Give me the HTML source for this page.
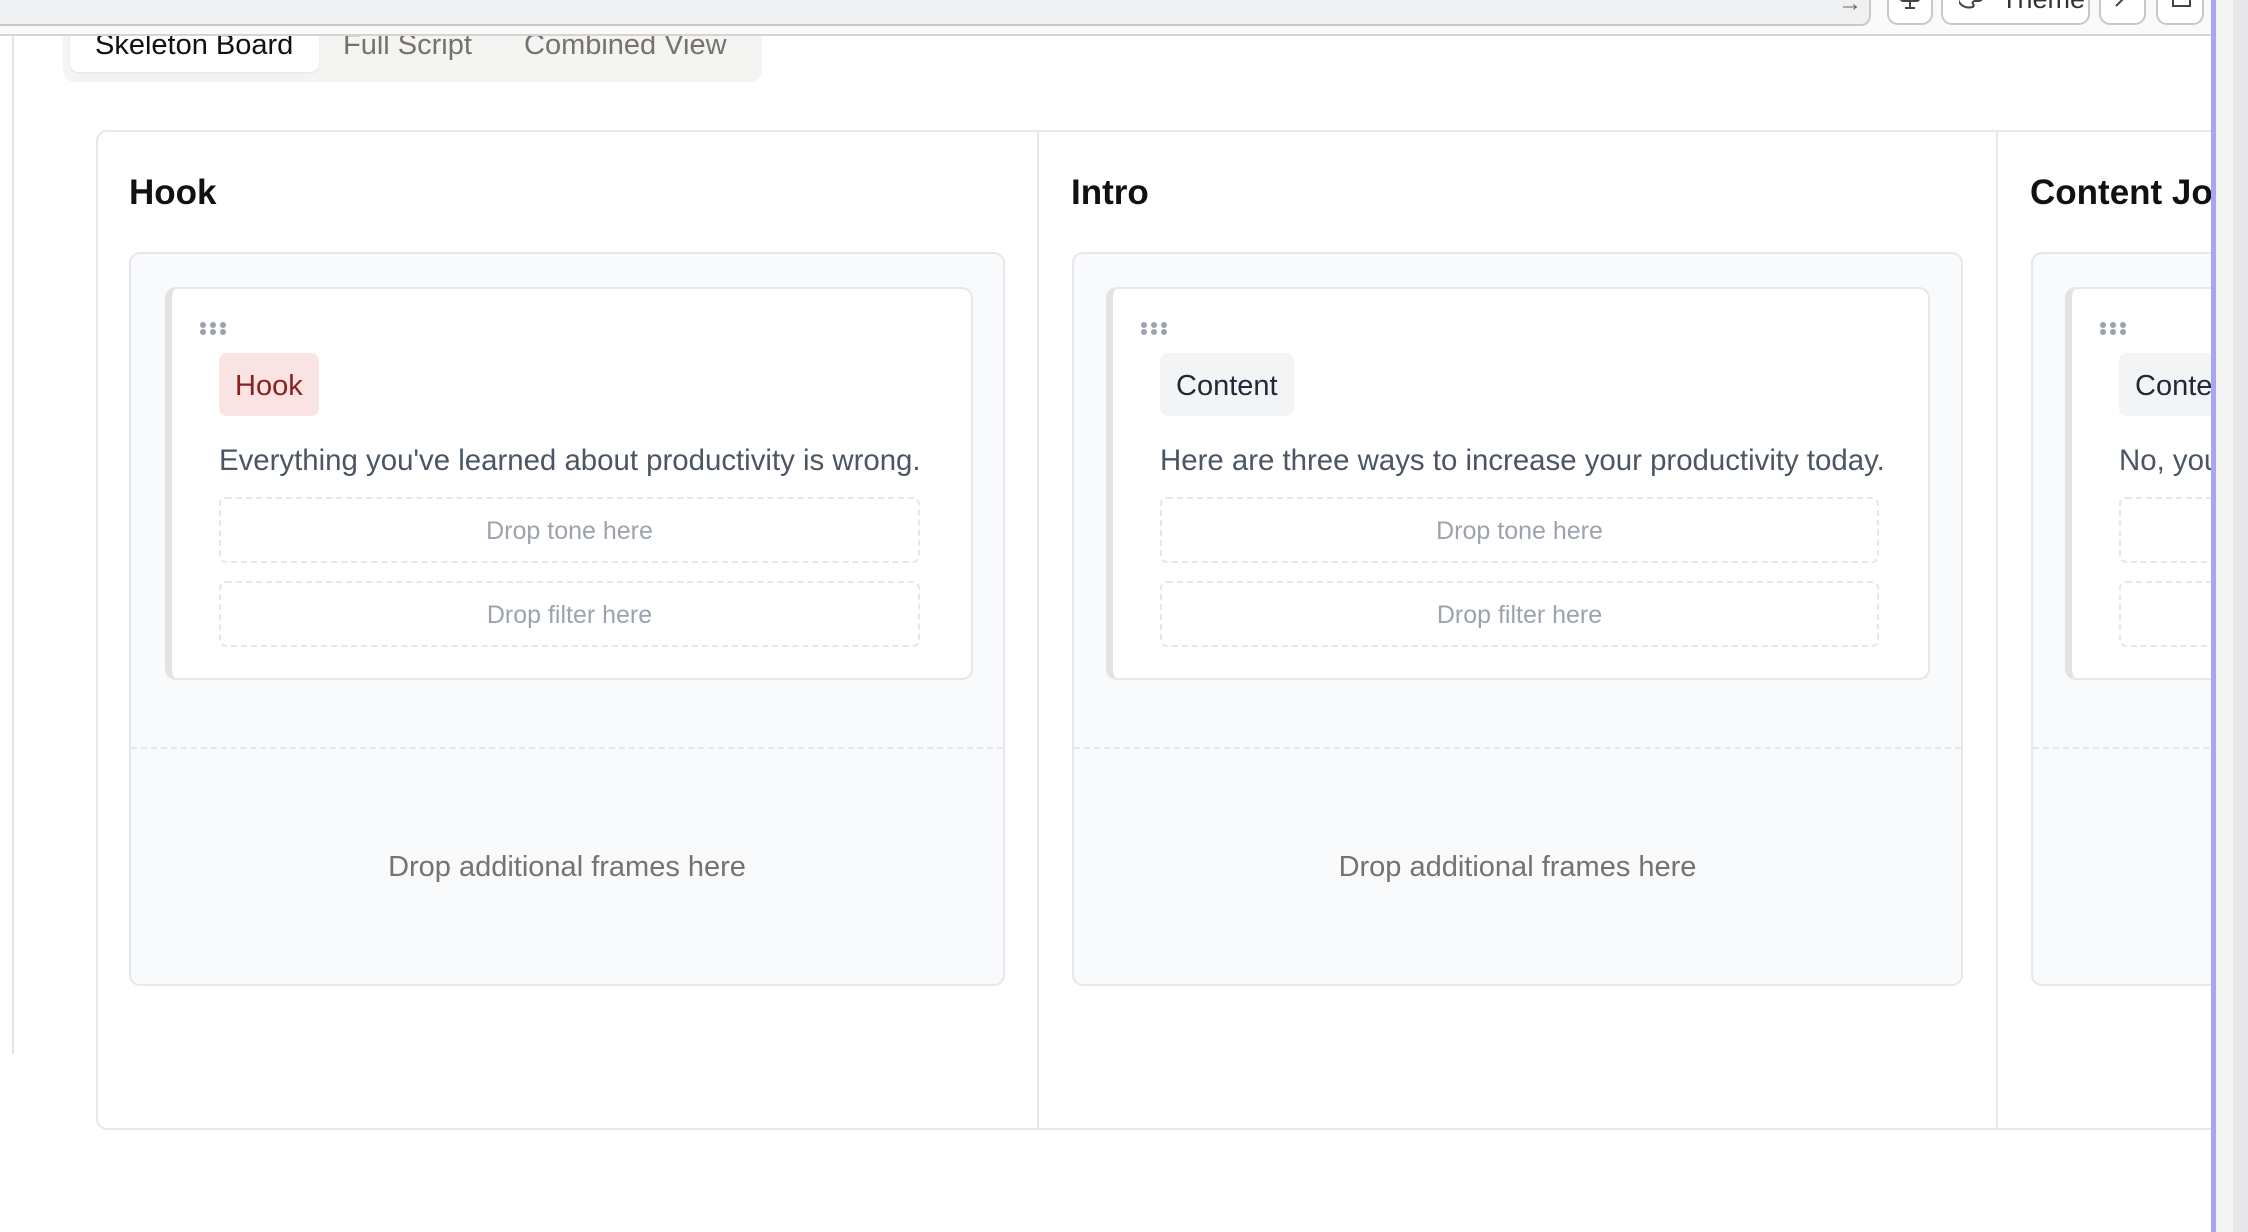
<!DOCTYPE html>
<html><head><meta charset="utf-8"><style>
*{box-sizing:border-box;margin:0;padding:0}
body{width:2248px;height:1232px;overflow:hidden;background:#fff;font-family:"Liberation Sans",Arial,sans-serif;position:relative}
.a{position:absolute}
.clip{position:absolute;left:0;top:36px;width:2211px;height:1196px;overflow:hidden}
.col-h{position:absolute;font-size:35px;font-weight:bold;color:#111;top:137px;white-space:nowrap}
.area{position:absolute;top:216px;height:734px;background:#f9fafb;border:2px solid #e5e7eb;border-radius:11px}
.sep{position:absolute;left:0;right:0;top:493px;border-top:2px dashed #e5e7eb}
.more{position:absolute;left:0;right:0;top:597px;text-align:center;font-size:29px;color:#78716c}
.card{position:absolute;top:33px;height:393px;background:#fff;border:2px solid #e5e7eb;border-left:7px solid #e5e3e0;border-radius:11px}
.dots{position:absolute;left:28px;top:33px;width:26px;height:12px}
.dots i{position:absolute;width:6px;height:6px;border-radius:50%;background:#9ca3af}
.badge{position:absolute;left:47px;top:64px;height:63px;padding:0 16px;border-radius:8px;font-size:29px;line-height:66px}
.txt{position:absolute;left:47px;top:155px;font-size:29.4px;color:#4b5563;white-space:nowrap}
.drop{position:absolute;left:47px;height:66px;border:2px dashed #e5e7eb;border-radius:7px;text-align:center;line-height:64px;font-size:25px;color:#9ca3af}
.btn{position:absolute;top:-12px;height:37px;border:2px solid #c8c8c8;border-radius:11px;background:#fff;overflow:hidden}
</style></head><body>
<div class="a" style="left:0;top:0;width:2211px;height:36px;background:#fafafa;border-bottom:2px solid #d4d4d4"></div>
<div class="a" style="left:-10px;top:-10px;width:1881px;height:36px;background:#eff0f2;border:2px solid #c8c8c8;border-radius:10px"></div>
<div class="a" style="left:1838px;top:-10px;font-size:24px;color:#666">→</div>
<div class="btn" style="left:1887px;width:46px"><svg class="a" style="left:10px;top:2px" width="22" height="22" viewBox="0 0 22 22" fill="none" stroke="#444" stroke-width="2"><rect x="2" y="-4" width="18" height="13" rx="2"/><path d="M11 9v6M6 16h10"/></svg></div>
<div class="btn" style="left:1941px;width:149px"><svg class="a" style="left:16px;top:-6px" width="26" height="26" viewBox="0 0 26 26" fill="none" stroke="#444" stroke-width="2"><path d="M13 2a11 11 0 1 0 0 21c2 0 2-2 1-3s0-3 2-3h3c3 0 5-2 5-5C24 6 19 2 13 2z"/></svg><span class="a" style="left:58px;top:-6px;line-height:30px;font-size:27px;color:#333">Theme</span></div>
<div class="btn" style="left:2099px;width:47px"><svg class="a" style="left:12px;top:-4px" width="22" height="22" viewBox="0 0 22 22" fill="none" stroke="#444" stroke-width="2"><path d="M3 20l8-8M12 11a5 5 0 1 0 5-9"/></svg></div>
<div class="btn" style="left:2156px;width:48px"><svg class="a" style="left:12px;top:-4px" width="22" height="22" viewBox="0 0 22 22" fill="none" stroke="#444" stroke-width="2"><path d="M9 3H3v17h17v-6M12 10l8-8M14 2h6v6"/></svg></div>
<div class="a" style="left:2211px;top:0;width:5px;height:1232px;background:#a9a4f5"></div>
<div class="a" style="left:2216px;top:0;width:17px;height:1232px;background:#f4f4f5"></div>
<div class="a" style="left:2233px;top:0;width:15px;height:1232px;background:#e8e8ea"></div>

<div class="clip">
<div class="a" style="left:12px;top:0;width:2px;height:1018px;background:#e5e5e5"></div>
<div class="a" style="left:63px;top:-30px;width:699px;height:76px;background:#f4f4f3;border-radius:12px"></div>
<div class="a" style="left:70px;top:-30px;width:249px;height:66px;background:#fff;border-radius:9px;box-shadow:0 1px 2px rgba(0,0,0,.08)"></div>
<div class="a" style="left:95px;top:-7px;font-size:29px;color:#111">Skeleton Board</div>
<div class="a" style="left:343px;top:-7px;font-size:29px;color:#78716c">Full Script</div>
<div class="a" style="left:524px;top:-7px;font-size:29px;color:#78716c">Combined View</div>
<div class="a" style="left:96px;top:94px;width:2300px;height:1000px;border:2px solid #e5e7eb;border-radius:11px"></div>
<div class="a" style="left:1037px;top:95px;width:2px;height:998px;background:#e5e7eb"></div>
<div class="a" style="left:1996px;top:95px;width:2px;height:998px;background:#e5e7eb"></div>

<div class="col-h" style="left:129px">Hook</div>
<div class="area" style="left:129px;width:876px">
 <div class="card" style="left:34px;width:808px">
  <div class="dots"><i style="left:0;top:0"></i><i style="left:10px;top:0"></i><i style="left:20px;top:0"></i><i style="left:0;top:7px"></i><i style="left:10px;top:7px"></i><i style="left:20px;top:7px"></i></div>
  <div class="badge" style="background:#fae3e3;color:#8b1e1e">Hook</div>
  <div class="txt">Everything you've learned about productivity is wrong.</div>
  <div class="drop" style="top:208px;width:701px">Drop tone here</div>
  <div class="drop" style="top:292px;width:701px">Drop filter here</div>
 </div>
 <div class="sep"></div><div class="more">Drop additional frames here</div>
</div>
<div class="col-h" style="left:1071px">Intro</div>
<div class="area" style="left:1072px;width:891px">
 <div class="card" style="left:32px;width:824px">
  <div class="dots"><i style="left:0;top:0"></i><i style="left:10px;top:0"></i><i style="left:20px;top:0"></i><i style="left:0;top:7px"></i><i style="left:10px;top:7px"></i><i style="left:20px;top:7px"></i></div>
  <div class="badge" style="background:#f3f4f6;color:#1f2937">Content</div>
  <div class="txt">Here are three ways to increase your productivity today.</div>
  <div class="drop" style="top:208px;width:719px">Drop tone here</div>
  <div class="drop" style="top:292px;width:719px">Drop filter here</div>
 </div>
 <div class="sep"></div><div class="more">Drop additional frames here</div>
</div>
<div class="col-h" style="left:2030px">Content Journey</div>
<div class="area" style="left:2031px;width:891px">
 <div class="card" style="left:32px;width:824px">
  <div class="dots"><i style="left:0;top:0"></i><i style="left:10px;top:0"></i><i style="left:20px;top:0"></i><i style="left:0;top:7px"></i><i style="left:10px;top:7px"></i><i style="left:20px;top:7px"></i></div>
  <div class="badge" style="background:#f3f4f6;color:#1f2937">Content</div>
  <div class="txt">No, you don't need another app.</div>
  <div class="drop" style="top:208px;width:719px">Drop tone here</div>
  <div class="drop" style="top:292px;width:719px">Drop filter here</div>
 </div>
 <div class="sep"></div><div class="more">Drop additional frames here</div>
</div>
</div>
</body></html>
